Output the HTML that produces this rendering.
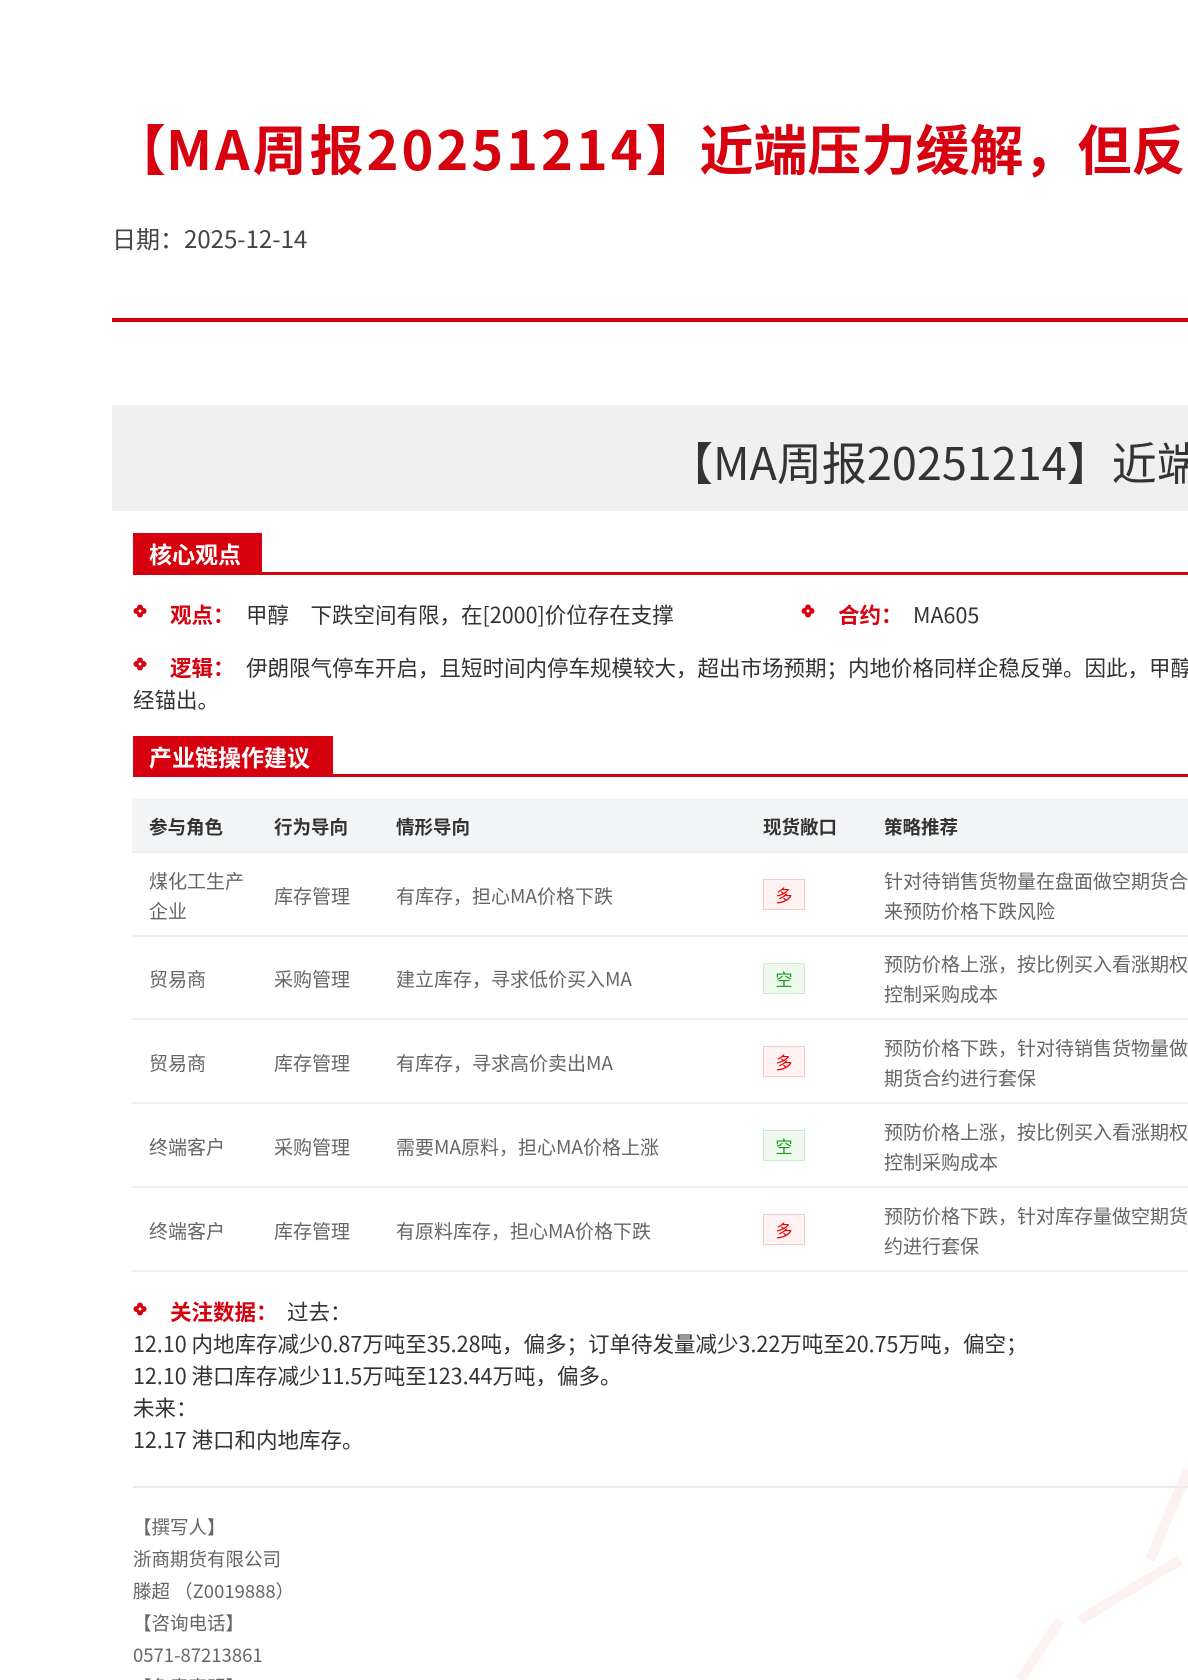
<!DOCTYPE html>
<html><head><meta charset="utf-8"><style>
*{margin:0;padding:0;box-sizing:border-box}
html,body{width:1188px;height:1680px;overflow:hidden;background:#fff}
body{position:relative;font-family:"Noto Sans CJK SC","Liberation Sans",sans-serif;color:#333}
.a{position:absolute;white-space:nowrap}
.red{color:#d7000f}
.bul{position:absolute;width:14px;height:14px}
.sec{position:absolute;left:133px;height:41px;background:#d7000f;color:#fff;font-weight:bold;font-size:23px;line-height:41px;padding-left:16px}
.secl{position:absolute;left:133px;right:0;height:3px;background:#d7000f}
.td{position:absolute;font-size:19px;color:#666;white-space:nowrap;line-height:30px}
.th{position:absolute;font-size:18.5px;color:#333;font-weight:bold;white-space:nowrap;line-height:24px}
.rowb{position:absolute;left:132px;right:0;height:2px;background:#edf0f3}
.tag{position:absolute;left:763px;width:42px;height:31px;font-size:17px;line-height:29px;text-align:center}
.tr{background:#fff2f2;border:1px solid #f7caca;color:#e00}
.tg{background:#effaef;border:1px solid #c9ebc9;color:#1a9a1a}
.wt{position:absolute;left:133px;font-size:18.5px;color:#666;line-height:32px;white-space:nowrap}
.t{font-size:21.5px}
.c1{left:149px}.c2{left:274px}.c3{left:396px}.c5{left:884px}
</style></head><body>
<svg class="a" style="left:0;top:0" width="1188" height="1680"><g stroke="#fdf1f1" stroke-width="10" fill="none"><path d="M1150 1560 L1188 1470"/><path d="M1080 1620 L1180 1560"/><path d="M1020 1680 L1060 1620"/></g></svg>
<div class="a red" style="left:112px;top:110px;font-size:54px;font-weight:bold;line-height:74px">【<span style="letter-spacing:3px">MA周报20251214</span>】近端压力缓解，但反弹空间有限</div>
<div class="a" style="left:112px;top:223px;font-size:24px;line-height:30px;color:#444">日期：2025-12-14</div>
<div class="a" style="left:112px;top:318px;right:0;height:4px;background:#d7000f"></div>
<div class="a" style="left:112px;top:405px;right:0;height:106px;background:#f0f0f0"></div>
<div class="a" style="left:668px;top:432px;font-size:45px;line-height:58px;color:#333">【MA周报20251214】近端压力缓解</div>

<div class="secl" style="top:572px"></div>
<div class="sec" style="top:533px;width:129px">核心观点</div>

<svg class="bul" style="left:133px;top:604px" viewBox="0 0 14 14"><g fill="#d7000f"><circle cx="7" cy="3.5" r="3"/><circle cx="7" cy="10.5" r="3"/><circle cx="3.5" cy="7" r="3"/><circle cx="10.5" cy="7" r="3"/></g><circle cx="7" cy="7" r="1.5" fill="#fff"/></svg>
<div class="a red t" style="left:170px;top:600px;font-weight:bold;line-height:30px">观点：</div>
<div class="a t" style="left:246px;top:600px;line-height:30px">甲醇　下跌空间有限，在[2000]价位存在支撑</div>
<svg class="bul" style="left:801px;top:604px" viewBox="0 0 14 14"><g fill="#d7000f"><circle cx="7" cy="3.5" r="3"/><circle cx="7" cy="10.5" r="3"/><circle cx="3.5" cy="7" r="3"/><circle cx="10.5" cy="7" r="3"/></g><circle cx="7" cy="7" r="1.5" fill="#fff"/></svg>
<div class="a red t" style="left:838px;top:600px;font-weight:bold;line-height:30px">合约：</div>
<div class="a t" style="left:913px;top:600px;line-height:30px">MA605</div>

<svg class="bul" style="left:133px;top:657px" viewBox="0 0 14 14"><g fill="#d7000f"><circle cx="7" cy="3.5" r="3"/><circle cx="7" cy="10.5" r="3"/><circle cx="3.5" cy="7" r="3"/><circle cx="10.5" cy="7" r="3"/></g><circle cx="7" cy="7" r="1.5" fill="#fff"/></svg>
<div class="a red t" style="left:170px;top:653px;font-weight:bold;line-height:30px">逻辑：</div>
<div class="a t" style="left:246px;top:653px;line-height:30px">伊朗限气停车开启，且短时间内停车规模较大，超出市场预期；内地价格同样企稳反弹。因此，甲醇[下方底部已</div>
<div class="a t" style="left:133px;top:685px;line-height:30px">经锚出。</div>

<div class="secl" style="top:774px"></div>
<div class="sec" style="top:736px;width:200px">产业链操作建议</div>

<div class="a" style="left:132px;top:799px;right:0;height:53px;background:#f3f4f6"></div>
<div class="rowb" style="top:851px"></div>
<div class="th c1" style="top:815px">参与角色</div>
<div class="th c2" style="top:815px">行为导向</div>
<div class="th c3" style="top:815px">情形导向</div>
<div class="th" style="left:763px;top:815px">现货敞口</div>
<div class="th c5" style="top:815px">策略推荐</div>

<div class="td c1" style="top:866px">煤化工生产<br>企业</div>
<div class="td c2" style="top:881px">库存管理</div>
<div class="td c3" style="top:881px">有库存，担心MA价格下跌</div>
<div class="tag tr" style="top:879px">多</div>
<div class="td c5" style="top:866px">针对待销售货物量在盘面做空期货合约<br>来预防价格下跌风险</div>
<div class="rowb" style="top:935px"></div>

<div class="td c1" style="top:964px">贸易商</div>
<div class="td c2" style="top:964px">采购管理</div>
<div class="td c3" style="top:964px">建立库存，寻求低价买入MA</div>
<div class="tag tg" style="top:963px">空</div>
<div class="td c5" style="top:949px">预防价格上涨，按比例买入看涨期权以<br>控制采购成本</div>
<div class="rowb" style="top:1018px"></div>

<div class="td c1" style="top:1048px">贸易商</div>
<div class="td c2" style="top:1048px">库存管理</div>
<div class="td c3" style="top:1048px">有库存，寻求高价卖出MA</div>
<div class="tag tr" style="top:1046px">多</div>
<div class="td c5" style="top:1033px">预防价格下跌，针对待销售货物量做空<br>期货合约进行套保</div>
<div class="rowb" style="top:1102px"></div>

<div class="td c1" style="top:1132px">终端客户</div>
<div class="td c2" style="top:1132px">采购管理</div>
<div class="td c3" style="top:1132px">需要MA原料，担心MA价格上涨</div>
<div class="tag tg" style="top:1130px">空</div>
<div class="td c5" style="top:1117px">预防价格上涨，按比例买入看涨期权以<br>控制采购成本</div>
<div class="rowb" style="top:1186px"></div>

<div class="td c1" style="top:1216px">终端客户</div>
<div class="td c2" style="top:1216px">库存管理</div>
<div class="td c3" style="top:1216px">有原料库存，担心MA价格下跌</div>
<div class="tag tr" style="top:1214px">多</div>
<div class="td c5" style="top:1201px">预防价格下跌，针对库存量做空期货合<br>约进行套保</div>
<div class="rowb" style="top:1270px"></div>

<svg class="bul" style="left:133px;top:1302px" viewBox="0 0 14 14"><g fill="#d7000f"><circle cx="7" cy="3.5" r="3"/><circle cx="7" cy="10.5" r="3"/><circle cx="3.5" cy="7" r="3"/><circle cx="10.5" cy="7" r="3"/></g><circle cx="7" cy="7" r="1.5" fill="#fff"/></svg>
<div class="a red t" style="left:170px;top:1297px;font-weight:bold;line-height:30px">关注数据：</div>
<div class="a t" style="left:287px;top:1297px;line-height:30px">过去：</div>
<div class="a t" style="left:133px;top:1328px;line-height:32px">12.10 内地库存减少0.87万吨至35.28吨，偏多；订单待发量减少3.22万吨至20.75万吨，偏空；<br>12.10 港口库存减少11.5万吨至123.44万吨，偏多。<br>未来：<br>12.17 港口和内地库存。</div>

<div class="a" style="left:133px;top:1486px;right:0;height:2px;background:#ececec"></div>
<div class="wt" style="top:1511px">【撰写人】<br>浙商期货有限公司<br>滕超 （Z0019888）<br>【咨询电话】<br>0571-87213861<br>【免责声明】</div>
</body></html>
